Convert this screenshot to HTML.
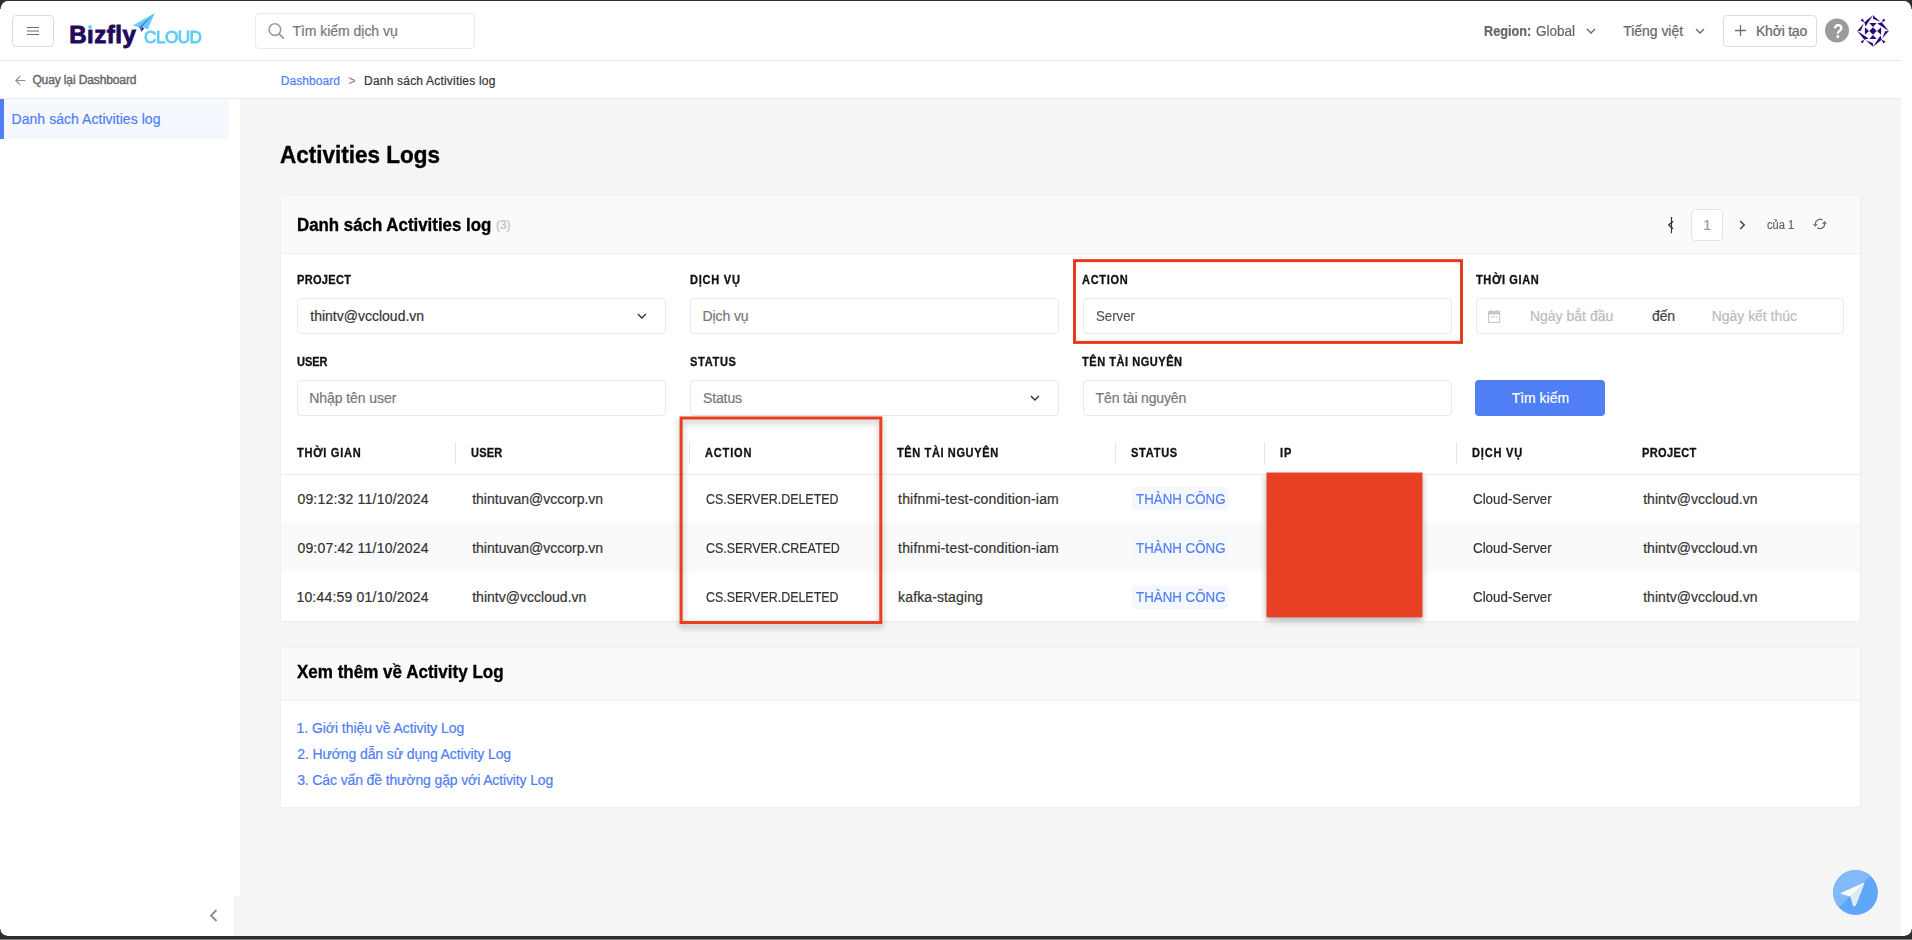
<!DOCTYPE html>
<html lang="vi">
<head>
<meta charset="utf-8">
<title>Activities Logs - Bizfly Cloud</title>
<style>
*{box-sizing:border-box;margin:0;padding:0}
html,body{width:1912px;height:940px;overflow:hidden}
body{background:#fff;font-family:"Liberation Sans",sans-serif;color:#333;font-size:14px;position:relative}
.t{position:absolute;white-space:nowrap;line-height:1;display:block}
.b{position:absolute;display:block}
svg{position:absolute;overflow:visible}
.box{position:absolute;border:1px solid #dcdcdc;border-radius:4px;background:#fff}
.inp{position:absolute;height:36px;width:369px;border:1px solid #e9e9e9;border-radius:4px;background:#fff}
.card{position:absolute;left:280px;width:1581px;background:#fff;border:1px solid #efefef;border-radius:3px}
.ch{position:absolute;left:281px;width:1579px;background:#fafafa;border-bottom:1px solid #efefef}
.vsep{position:absolute;width:1px;height:22px;background:#e6e6e6;top:442px}
.tag{position:absolute;left:1132px;width:97px;height:24px;border-radius:5px;background:#f6f8ff}
.rowbg{position:absolute;left:281px;width:1579px;height:49px}
</style>
</head>
<body>
<!-- page backgrounds -->
<div class="b" style="left:240px;top:99px;width:1661px;height:837px;background:#f5f5f5"></div>
<div class="b" style="left:234px;top:896px;width:6px;height:40px;background:#f5f5f5"></div>
<header>
<div class="b" style="left:0;top:60px;width:1901px;height:1px;background:#e8e8e8"></div>
<div class="box" style="left:12px;top:15px;width:42px;height:32px"></div>
<svg style="left:27px;top:26px" width="12" height="10" viewBox="0 0 12 10"><path d="M0 1.5h12M0 5h12M0 8.5h12" stroke="#6b6b6b" stroke-width="1.1" fill="none"/></svg>
<a class="logo"><span class="t" style="left:69.2px;top:23px;font-size:24px;font-weight:bold;color:#1f0a5c;letter-spacing:0.528px;-webkit-text-stroke:.9px #1f0a5c;">Bizfly</span><span class="t" style="left:144.3px;top:29px;font-size:16.5px;color:#5fcdf5;letter-spacing:-0.494px;-webkit-text-stroke:.9px #5fcdf5;transform:scaleX(1.04);transform-origin:0 0;">CLOUD</span>
<svg style="left:86px;top:22px" width="8" height="8" viewBox="86 22 8 8"><rect x="86.8" y="22.5" width="6.6" height="6.8" fill="#fff"/><circle cx="90.1" cy="27" r="1.9" fill="#5fcdf5"/></svg>
<svg style="left:130px;top:10px" width="30" height="25" viewBox="130 10 30 25"><polygon points="154.8,12.9 132.8,25.6 139.4,27.4" fill="#63d0f4"/><polygon points="154.8,12.9 141.6,27.2 147.9,29.2" fill="#63d0f4"/><polygon points="154.8,12.9 139,27 141.4,32 141.7,27.4" fill="#5577f0"/><polygon points="141.7,27.3 141.4,32 144,28.2" fill="#1f0a5c"/></svg>
</a>
<div class="box" style="left:255px;top:13px;width:220px;height:36px;border-color:#ebebeb"></div>
<svg style="left:267px;top:22px" width="18" height="18" viewBox="0 0 18 18"><circle cx="7.9" cy="7.6" r="5.8" fill="none" stroke="#9a9a9a" stroke-width="1.6"/><path d="M12.2 12l4.2 4.2" stroke="#9a9a9a" stroke-width="1.8" stroke-linecap="round"/></svg>
<span class="t" style="left:292.5px;top:24px;font-size:14px;color:#777;letter-spacing:-0.041px;-webkit-text-stroke:.2px;">Tìm kiếm dịch vụ</span>
<span class="t" style="left:1483.8px;top:24px;font-size:14px;font-weight:bold;color:#666;-webkit-text-stroke:.2px #666;transform:scaleX(0.908);transform-origin:0 0;">Region:</span><span class="t" style="left:1535.7px;top:24px;font-size:14px;color:#666;-webkit-text-stroke:.2px;transform:scaleX(0.964);transform-origin:0 0;">Global</span>
<svg style="left:1586px;top:28px" width="10" height="6" viewBox="0 0 10 6"><path d="M1 1l4 4 4-4" fill="none" stroke="#666" stroke-width="1.3"/></svg>
<span class="t" style="left:1623.2px;top:24px;font-size:14px;color:#666;letter-spacing:-0.032px;-webkit-text-stroke:.2px;">Tiếng việt</span>
<svg style="left:1694.5px;top:28px" width="10" height="6" viewBox="0 0 10 6"><path d="M1 1l4 4 4-4" fill="none" stroke="#666" stroke-width="1.3"/></svg>
<div class="box" style="left:1723px;top:15px;width:94px;height:32px"></div>
<svg style="left:1735px;top:25.1px" width="11" height="11" viewBox="0 0 11 11"><path d="M5.5 0v11M0 5.5h11" stroke="#707070" stroke-width="1.3"/></svg>
<span class="t" style="left:1756px;top:24px;font-size:14px;color:#666;letter-spacing:-0.226px;-webkit-text-stroke:.2px;">Khởi tạo</span>
<svg style="left:1824px;top:17px" width="26" height="27" viewBox="1824 17 26 27"><circle cx="1837" cy="30.5" r="12" fill="#9b9b9b"/></svg>
<span class="t" style="left:1832.8px;top:21px;font-size:20px;font-weight:bold;color:#fff;transform:scaleX(.85);transform-origin:0 0;">?</span>
<svg style="left:1857px;top:15px" width="32" height="32" viewBox="0 0 32 32"><g fill="#2b0a7c" id="av"><polygon points="16.2,0 7.3,7.3 8.5,11.6"/><polygon points="15.9,0.2 16.2,3.9 23.4,6.8"/><polygon points="3.5,5.4 5.5,3.6 7.6,7.6"/><polygon points="12.3,7.9 19.7,7.9 16,12"/></g><g fill="#2b0a7c" transform="rotate(90 16 16)"><polygon points="16.2,0 7.3,7.3 8.5,11.6"/><polygon points="15.9,0.2 16.2,3.9 23.4,6.8"/><polygon points="3.5,5.4 5.5,3.6 7.6,7.6"/><polygon points="12.3,7.9 19.7,7.9 16,12"/></g><g fill="#2b0a7c" transform="rotate(180 16 16)"><polygon points="16.2,0 7.3,7.3 8.5,11.6"/><polygon points="15.9,0.2 16.2,3.9 23.4,6.8"/><polygon points="3.5,5.4 5.5,3.6 7.6,7.6"/><polygon points="12.3,7.9 19.7,7.9 16,12"/></g><g fill="#2b0a7c" transform="rotate(270 16 16)"><polygon points="16.2,0 7.3,7.3 8.5,11.6"/><polygon points="15.9,0.2 16.2,3.9 23.4,6.8"/><polygon points="3.5,5.4 5.5,3.6 7.6,7.6"/><polygon points="12.3,7.9 19.7,7.9 16,12"/></g><polygon fill="#2b0a7c" points="16,12.3 19.7,16 16,19.7 12.3,16"/></svg>
</header>
<nav>
<div class="b" style="left:0;top:98px;width:1901px;height:1px;background:#eaeaea"></div>
<svg style="left:14.5px;top:74.5px" width="11" height="11" viewBox="0 0 11 11"><path d="M10.3 5.500H1M5.2 1.200L.9 5.5l4.3 4.3" fill="none" stroke="#8f8f8f" stroke-width="1.2"/></svg>
<span class="t" style="left:32.4px;top:74px;font-size:12px;color:#666;letter-spacing:-0.117px;-webkit-text-stroke:.4px #666;">Quay lại Dashboard</span>
<span class="t" style="left:280.7px;top:75px;font-size:12px;color:#4f7ef5;letter-spacing:0.071px;-webkit-text-stroke:.2px;">Dashboard</span><span class="t" style="left:348.4px;top:75px;font-size:12px;color:#888;-webkit-text-stroke:.2px;">&gt;</span><span class="t" style="left:364.1px;top:75px;font-size:12px;color:#333;letter-spacing:0.195px;-webkit-text-stroke:.2px;">Danh sách Activities log</span>
<div class="b" style="left:0;top:99px;width:229px;height:40px;background:#f5f8ff;border-left:4px solid #4f7ef5"></div>
<span class="t" style="left:11.55px;top:112px;font-size:14px;color:#4f7ef5;letter-spacing:0.044px;-webkit-text-stroke:.2px;">Danh sách Activities log</span>
<svg style="left:209px;top:909px" width="9" height="13" viewBox="0 0 9 13"><path d="M7.5 1L2 6.5l5.5 5.5" fill="none" stroke="#8c8c8c" stroke-width="1.8"/></svg>
</nav>
<main>
<span class="t" style="left:280px;top:143px;font-size:24px;font-weight:bold;color:#000;letter-spacing:0.006px;-webkit-text-stroke:.4px #000;transform:scaleX(0.937);transform-origin:0 0;">Activities Logs</span>
<section>
<div class="card" style="top:195px;height:427px"></div>
<div class="ch" style="top:196px;height:58px"></div>
<span class="t" style="left:297.06px;top:216px;font-size:18px;font-weight:bold;color:#000;-webkit-text-stroke:.35px #000;transform:scaleX(0.937);transform-origin:0 0;">Danh sách Activities log</span><span class="t" style="left:496px;top:219px;font-size:12px;color:#bdbdbd;letter-spacing:-0.085px;-webkit-text-stroke:.2px;">(3)</span>
<!-- pagination -->
<svg style="left:1664px;top:215px" width="12" height="20" viewBox="1664 215 12 20"><path d="M1671.5 217.300V232.700M1672.8 221.600L1668.6 225l4.2 3.4" fill="none" stroke="#fff" stroke-width="3" stroke-linecap="round" opacity=".9"/><path d="M1671.5 217.300V232.7" stroke="#333" stroke-width="1.2" stroke-linecap="round"/><path d="M1672.8 221.600L1668.6 225l4.2 3.4" fill="none" stroke="#333" stroke-width="1.3" stroke-linecap="round" stroke-linejoin="round"/></svg>
<div class="box" style="left:1691px;top:209px;width:32px;height:32px;border-color:#e1e5ee"></div>
<span class="t" style="left:1703.2px;top:218px;font-size:14px;color:#999;-webkit-text-stroke:.2px;">1</span>
<svg style="left:1739px;top:220px" width="7" height="10" viewBox="0 0 7 10"><path d="M1.2 1l4 4-4 4" fill="none" stroke="#444" stroke-width="1.5"/></svg>
<span class="t" style="left:1766.9px;top:219px;font-size:12px;color:#666;-webkit-text-stroke:.2px;transform:scaleX(0.93);transform-origin:0 0;">của 1</span>
<svg style="left:1810px;top:215px" width="20" height="18" viewBox="1810 215 20 18"><path d="M1822.64 220.130A4.6 4.6 0 0 0 1815.4 224.300M1817.4 227.700A4.6 4.6 0 0 0 1824.6 223.5" fill="none" stroke="#6b6b6b" stroke-width="1.2"/><path d="M1812.8 224.2h5.1l-2.5 2.6zM1822 223.7h5.1l-2.500-2.6z" fill="#6b6b6b"/></svg>
<!-- filters -->
<span class="t" style="left:296.9px;top:274px;font-size:12px;font-weight:bold;color:#111;letter-spacing:0.333px;-webkit-text-stroke:.3px #111;transform:scaleX(.92);transform-origin:0 0;">PROJECT</span><span class="t" style="left:689.5px;top:274px;font-size:12px;font-weight:bold;color:#111;letter-spacing:0.82px;-webkit-text-stroke:.3px #111;transform:scaleX(.92);transform-origin:0 0;">DỊCH VỤ</span><span class="t" style="left:1082.4px;top:274px;font-size:12px;font-weight:bold;color:#111;letter-spacing:0.76px;-webkit-text-stroke:.3px #111;transform:scaleX(.92);transform-origin:0 0;">ACTION</span><span class="t" style="left:1475.5px;top:274px;font-size:12px;font-weight:bold;color:#111;letter-spacing:0.658px;-webkit-text-stroke:.3px #111;transform:scaleX(.92);transform-origin:0 0;">THỜI GIAN</span>
<div class="inp" style="left:297px;top:298px"></div>
<div class="inp" style="left:690px;top:298px"></div>
<div class="inp" style="left:1083px;top:298px"></div>
<div class="inp" style="left:1476px;top:298px;width:368px"></div>
<span class="t" style="left:310.3px;top:309px;font-size:14px;color:#333;-webkit-text-stroke:.2px;">thintv@vccloud.vn</span>
<svg style="left:637px;top:313px" width="10" height="6" viewBox="0 0 10 6"><path d="M.9 1l4 3.9 4-3.9" fill="none" stroke="#333" stroke-width="1.4"/></svg>
<span class="t" style="left:702.5px;top:309px;font-size:14px;color:#777;letter-spacing:-0.099px;-webkit-text-stroke:.2px;">Dịch vụ</span><span class="t" style="left:1095.6px;top:309px;font-size:14px;color:#555;-webkit-text-stroke:.2px;transform:scaleX(0.945);transform-origin:0 0;">Server</span>
<svg style="left:1488px;top:309.5px" width="13" height="13" viewBox="0 0 13 13"><rect x=".6" y="1.6" width="11" height="10.8" fill="none" stroke="#c6c6c6" stroke-width="1.1"/><rect x=".1" y="1.1" width="12" height="3.4" fill="#c6c6c6"/><path d="M3.2 0v2M9 0v2" stroke="#c6c6c6" stroke-width="1.4"/><path d="M3 7h1.400M5.4 7h1.400M7.8 7h1.4" stroke="#c6c6c6" stroke-width="1.3"/></svg>
<span class="t" style="left:1529.9px;top:309px;font-size:14px;color:#bbb;letter-spacing:0.009px;-webkit-text-stroke:.2px;">Ngày bắt đầu</span><span class="t" style="left:1652px;top:309px;font-size:14px;color:#444;letter-spacing:-0.136px;-webkit-text-stroke:.2px;">đến</span><span class="t" style="left:1711.7px;top:309px;font-size:14px;color:#bbb;letter-spacing:-0.025px;-webkit-text-stroke:.2px;">Ngày kết thúc</span>
<span class="t" style="left:296.9px;top:356px;font-size:12px;font-weight:bold;color:#111;letter-spacing:-0.065px;-webkit-text-stroke:.3px #111;transform:scaleX(.92);transform-origin:0 0;">USER</span><span class="t" style="left:689.5px;top:356px;font-size:12px;font-weight:bold;color:#111;letter-spacing:0.735px;-webkit-text-stroke:.3px #111;transform:scaleX(.92);transform-origin:0 0;">STATUS</span><span class="t" style="left:1082.4px;top:356px;font-size:12px;font-weight:bold;color:#111;letter-spacing:0.567px;-webkit-text-stroke:.3px #111;transform:scaleX(.92);transform-origin:0 0;">TÊN TÀI NGUYÊN</span>
<div class="inp" style="left:297px;top:380px"></div>
<div class="inp" style="left:690px;top:380px"></div>
<div class="inp" style="left:1083px;top:380px"></div>
<span class="t" style="left:309.3px;top:391px;font-size:14px;color:#777;letter-spacing:-0.074px;-webkit-text-stroke:.2px;">Nhập tên user</span><span class="t" style="left:702.9px;top:391px;font-size:14px;color:#777;letter-spacing:-0.098px;-webkit-text-stroke:.2px;">Status</span>
<svg style="left:1029.5px;top:395px" width="10" height="6" viewBox="0 0 10 6"><path d="M.9 1l4 3.9 4-3.9" fill="none" stroke="#333" stroke-width="1.4"/></svg>
<span class="t" style="left:1095.6px;top:391px;font-size:14px;color:#777;letter-spacing:-0.149px;-webkit-text-stroke:.2px;">Tên tài nguyên</span>
<div class="b" style="left:1475px;top:380px;width:130px;height:36px;border-radius:4px;background:#4f7ef5"></div>
<span class="t" style="left:1511.7px;top:391px;font-size:14px;color:#fff;letter-spacing:-0.027px;-webkit-text-stroke:.2px;">Tìm kiếm</span>
<!-- table -->
<div class="b" style="left:281px;top:474px;width:1579px;height:1px;background:#ececec"></div>
<div class="rowbg" style="top:523px;background:#fafafa"></div>
<div class="vsep" style="left:455px"></div><div class="vsep" style="left:689px"></div><div class="vsep" style="left:881px"></div><div class="vsep" style="left:1115px"></div><div class="vsep" style="left:1264px"></div><div class="vsep" style="left:1456px"></div>
<span class="t" style="left:297.4px;top:447px;font-size:12px;font-weight:bold;color:#111;letter-spacing:0.78px;-webkit-text-stroke:.3px #111;transform:scaleX(.92);transform-origin:0 0;">THỜI GIAN</span><span class="t" style="left:470.8px;top:447px;font-size:12px;font-weight:bold;color:#111;letter-spacing:0.188px;-webkit-text-stroke:.3px #111;transform:scaleX(.92);transform-origin:0 0;">USER</span><span class="t" style="left:705.1px;top:447px;font-size:12px;font-weight:bold;color:#111;letter-spacing:0.912px;-webkit-text-stroke:.3px #111;transform:scaleX(.92);transform-origin:0 0;">ACTION</span><span class="t" style="left:897.4px;top:447px;font-size:12px;font-weight:bold;color:#111;letter-spacing:0.659px;-webkit-text-stroke:.3px #111;transform:scaleX(.92);transform-origin:0 0;">TÊN TÀI NGUYÊN</span><span class="t" style="left:1131.1px;top:447px;font-size:12px;font-weight:bold;color:#111;letter-spacing:0.801px;-webkit-text-stroke:.3px #111;transform:scaleX(.92);transform-origin:0 0;">STATUS</span><span class="t" style="left:1280.3px;top:447px;font-size:12px;font-weight:bold;color:#111;letter-spacing:0.949px;-webkit-text-stroke:.3px #111;transform:scaleX(.92);transform-origin:0 0;">IP</span><span class="t" style="left:1472.3px;top:447px;font-size:12px;font-weight:bold;color:#111;letter-spacing:0.874px;-webkit-text-stroke:.3px #111;transform:scaleX(.92);transform-origin:0 0;">DỊCH VỤ</span><span class="t" style="left:1642.4px;top:447px;font-size:12px;font-weight:bold;color:#111;letter-spacing:0.388px;-webkit-text-stroke:.3px #111;transform:scaleX(.92);transform-origin:0 0;">PROJECT</span>
<div class="tag" style="top:487px"></div><div class="tag" style="top:536px"></div><div class="tag" style="top:585px"></div>
<span class="t" style="left:297.4px;top:492px;font-size:14px;color:#333;letter-spacing:0.204px;-webkit-text-stroke:.2px;">09:12:32 11/10/2024</span><span class="t" style="left:472.2px;top:492px;font-size:14px;color:#333;-webkit-text-stroke:.2px;">thintuvan@vccorp.vn</span><span class="t" style="left:706.2px;top:492px;font-size:14px;color:#333;-webkit-text-stroke:.2px;transform:scaleX(0.889);transform-origin:0 0;">CS.SERVER.DELETED</span><span class="t" style="left:898.1px;top:492px;font-size:14px;color:#333;letter-spacing:0.171px;-webkit-text-stroke:.2px;">thifnmi-test-condition-iam</span><span class="t" style="left:1136.1px;top:492px;font-size:14px;color:#4f7ef5;letter-spacing:-0.005px;-webkit-text-stroke:.2px;transform:scaleX(0.952);transform-origin:0 0;">THÀNH CÔNG</span><span class="t" style="left:1473.1px;top:492px;font-size:14px;color:#333;-webkit-text-stroke:.2px;transform:scaleX(0.954);transform-origin:0 0;">Cloud-Server</span><span class="t" style="left:1643.2px;top:492px;font-size:14px;color:#333;letter-spacing:0.029px;-webkit-text-stroke:.2px;">thintv@vccloud.vn</span>
<span class="t" style="left:297.4px;top:541px;font-size:14px;color:#333;letter-spacing:0.204px;-webkit-text-stroke:.2px;">09:07:42 11/10/2024</span><span class="t" style="left:472.2px;top:541px;font-size:14px;color:#333;-webkit-text-stroke:.2px;">thintuvan@vccorp.vn</span><span class="t" style="left:706.2px;top:541px;font-size:14px;color:#333;-webkit-text-stroke:.2px;transform:scaleX(0.89);transform-origin:0 0;">CS.SERVER.CREATED</span><span class="t" style="left:898.1px;top:541px;font-size:14px;color:#333;letter-spacing:0.171px;-webkit-text-stroke:.2px;">thifnmi-test-condition-iam</span><span class="t" style="left:1136.1px;top:541px;font-size:14px;color:#4f7ef5;letter-spacing:-0.005px;-webkit-text-stroke:.2px;transform:scaleX(0.952);transform-origin:0 0;">THÀNH CÔNG</span><span class="t" style="left:1473.1px;top:541px;font-size:14px;color:#333;-webkit-text-stroke:.2px;transform:scaleX(0.954);transform-origin:0 0;">Cloud-Server</span><span class="t" style="left:1643.2px;top:541px;font-size:14px;color:#333;letter-spacing:0.029px;-webkit-text-stroke:.2px;">thintv@vccloud.vn</span>
<span class="t" style="left:296.4px;top:590px;font-size:14px;color:#333;letter-spacing:0.202px;-webkit-text-stroke:.2px;">10:44:59 01/10/2024</span><span class="t" style="left:472.2px;top:590px;font-size:14px;color:#333;letter-spacing:0.023px;-webkit-text-stroke:.2px;">thintv@vccloud.vn</span><span class="t" style="left:706.2px;top:590px;font-size:14px;color:#333;-webkit-text-stroke:.2px;transform:scaleX(0.889);transform-origin:0 0;">CS.SERVER.DELETED</span><span class="t" style="left:898.1px;top:590px;font-size:14px;color:#333;letter-spacing:0.126px;-webkit-text-stroke:.2px;">kafka-staging</span><span class="t" style="left:1136.1px;top:590px;font-size:14px;color:#4f7ef5;letter-spacing:-0.005px;-webkit-text-stroke:.2px;transform:scaleX(0.952);transform-origin:0 0;">THÀNH CÔNG</span><span class="t" style="left:1473.1px;top:590px;font-size:14px;color:#333;-webkit-text-stroke:.2px;transform:scaleX(0.954);transform-origin:0 0;">Cloud-Server</span><span class="t" style="left:1643.2px;top:590px;font-size:14px;color:#333;letter-spacing:0.029px;-webkit-text-stroke:.2px;">thintv@vccloud.vn</span>
</section>
<section>
<div class="card" style="top:647px;height:161px"></div>
<div class="ch" style="top:648px;height:53px"></div>
<span class="t" style="left:296.9px;top:663px;font-size:18px;font-weight:bold;color:#000;-webkit-text-stroke:.35px #000;transform:scaleX(0.946);transform-origin:0 0;">Xem thêm về Activity Log</span>
<span class="t" style="left:296.6px;top:721px;font-size:14px;color:#4f7ef5;letter-spacing:-0.063px;-webkit-text-stroke:.2px;">1. Giới thiệu về Activity Log</span><span class="t" style="left:297.2px;top:747px;font-size:14px;color:#4f7ef5;letter-spacing:-0.098px;-webkit-text-stroke:.2px;">2. Hướng dẫn sử dụng Activity Log</span><span class="t" style="left:297.2px;top:773px;font-size:14px;color:#4f7ef5;letter-spacing:-0.127px;-webkit-text-stroke:.2px;">3. Các vấn đề thường gặp với Activity Log</span>
</section>
<!-- annotations -->
<svg style="left:1065px;top:250px" width="410" height="105" viewBox="1065 250 410 105"><rect x="1074.5" y="260.65" width="387" height="81.75" fill="none" stroke="#e8391a" stroke-width="3"/></svg>
<svg style="left:665px;top:405px;filter:drop-shadow(0 3px 3px rgba(0,0,0,.3))" width="235" height="240" viewBox="665 405 235 240"><rect x="681.1" y="418" width="199.7" height="204.5" fill="none" stroke="#e8401f" stroke-width="3"/></svg>
<svg style="left:1255px;top:460px;filter:drop-shadow(0 3px 3px rgba(0,0,0,.32))" width="180" height="175" viewBox="1255 460 180 175"><rect x="1266.5" y="472.55" width="155.95" height="144.75" fill="#e84025"/></svg>
<!-- floating support button -->
<svg style="left:1832px;top:869px" width="47" height="47" viewBox="0 0 47 47"><defs><clipPath id="cc"><circle cx="23.5" cy="23.5" r="22.4"/></clipPath></defs><circle cx="23.5" cy="23.5" r="22.4" fill="#5ea6f8"/><polygon points="0,0 45.2,0 0,45.2" fill="#82b9fa" clip-path="url(#cc)"/><polygon points="31.5,14.6 9.6,24.3 18.7,26.9" fill="#fbfbfc" stroke="#fbfbfc" stroke-width="1.4" stroke-linejoin="round"/><polygon points="31.6,14.7 19,27.3 21.6,36.6 23.3,36.2" fill="#e4e8f0" stroke="#e4e8f0" stroke-width="1.4" stroke-linejoin="round"/></svg>
</main>
<!-- window frame -->
<div class="b" style="left:0;top:0;width:1912px;height:1px;background:#2d2d2d"></div>
<div class="b" style="left:0;top:936px;width:1912px;height:2.5px;background:#2f2f2f"></div>
<div class="b" style="left:0;top:938.5px;width:1912px;height:1.5px;background:#7c7c7c"></div>
<div class="b" style="left:0;top:0;width:9px;height:9px;background:radial-gradient(circle at 100% 100%,rgba(45,45,45,0) 7.8px,#2d2d2d 8.8px)"></div>
<div class="b" style="left:1903px;top:0;width:9px;height:9px;background:radial-gradient(circle at 0 100%,rgba(45,45,45,0) 7.8px,#2d2d2d 8.8px)"></div>
<div class="b" style="left:0;top:929px;width:7px;height:7px;background:radial-gradient(circle at 100% 0,rgba(47,47,47,0) 6px,#2f2f2f 7px)"></div>
<div class="b" style="left:1905px;top:929px;width:7px;height:7px;background:radial-gradient(circle at 0 0,rgba(47,47,47,0) 6px,#2f2f2f 7px)"></div>
</body>
</html>
